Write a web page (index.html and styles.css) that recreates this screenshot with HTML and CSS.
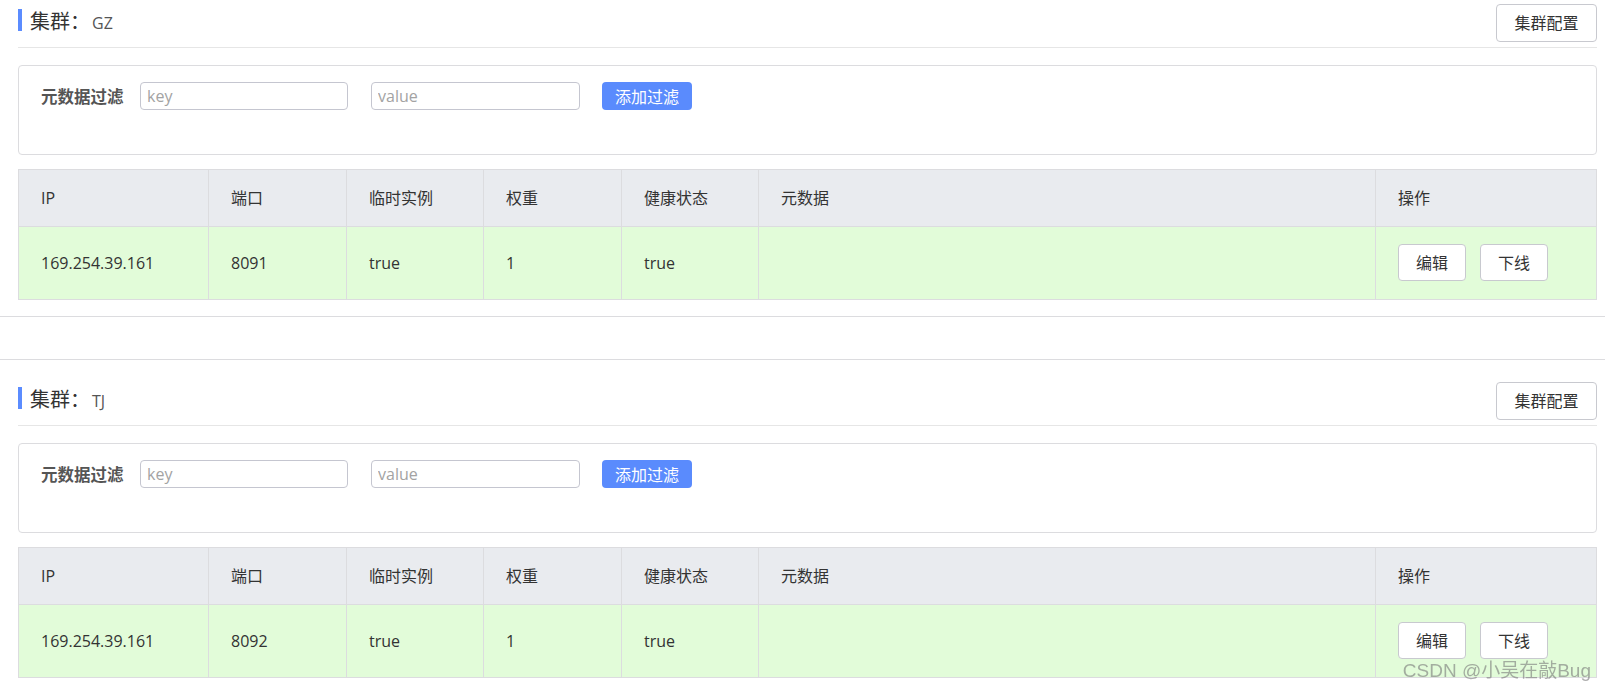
FILE: index.html
```html
<!DOCTYPE html>
<html lang="zh-CN">
<head>
<meta charset="utf-8">
<title>集群</title>
<link rel="stylesheet" href="styles.css">
</head>
<body>
<div class="page">
  <section class="cluster">
    <div class="cluster-head">
      <h2 class="cluster-title"><span class="title-main">集群：</span><span class="title-name">GZ</span></h2>
      <button class="btn btn-config" type="button">集群配置</button>
    </div>
    <div class="filter-card">
      <form class="filter-form">
        <label class="filter-label">元数据过滤</label>
        <input class="filter-input" type="text" placeholder="key">
        <input class="filter-input filter-input-value" type="text" placeholder="value">
        <button class="btn-primary" type="button">添加过滤</button>
      </form>
    </div>
    <table class="instances">
      <colgroup>
        <col class="c-ip"><col class="c-port"><col class="c-eph"><col class="c-weight"><col class="c-health"><col class="c-meta"><col>
      </colgroup>
      <thead>
        <tr><th>IP</th><th>端口</th><th>临时实例</th><th>权重</th><th>健康状态</th><th>元数据</th><th>操作</th></tr>
      </thead>
      <tbody>
        <tr>
          <td>169.254.39.161</td><td>8091</td><td>true</td><td>1</td><td>true</td><td></td>
          <td><div class="ops"><button class="btn btn-op" type="button">编辑</button><button class="btn btn-op" type="button">下线</button></div></td>
        </tr>
      </tbody>
    </table>
  </section>

  <section class="cluster">
    <div class="cluster-head">
      <h2 class="cluster-title"><span class="title-main">集群：</span><span class="title-name">TJ</span></h2>
      <button class="btn btn-config" type="button">集群配置</button>
    </div>
    <div class="filter-card">
      <form class="filter-form">
        <label class="filter-label">元数据过滤</label>
        <input class="filter-input" type="text" placeholder="key">
        <input class="filter-input filter-input-value" type="text" placeholder="value">
        <button class="btn-primary" type="button">添加过滤</button>
      </form>
    </div>
    <table class="instances">
      <colgroup>
        <col class="c-ip"><col class="c-port"><col class="c-eph"><col class="c-weight"><col class="c-health"><col class="c-meta"><col>
      </colgroup>
      <thead>
        <tr><th>IP</th><th>端口</th><th>临时实例</th><th>权重</th><th>健康状态</th><th>元数据</th><th>操作</th></tr>
      </thead>
      <tbody>
        <tr>
          <td>169.254.39.161</td><td>8092</td><td>true</td><td>1</td><td>true</td><td></td>
          <td><div class="ops"><button class="btn btn-op" type="button">编辑</button><button class="btn btn-op" type="button">下线</button></div></td>
        </tr>
      </tbody>
    </table>
  </section>
</div>
<div class="watermark">CSDN @小吴在敲Bug</div>
</body>
</html>
```

FILE: styles.css
```css
* { box-sizing: border-box; }

html, body {
  margin: 0;
  padding: 0;
  background: #fff;
}

body {
  font-family: "Open Sans", "Noto Sans CJK SC", sans-serif;
  font-size: 16px;
  color: #333;
  overflow: hidden;
}

.page {
  margin-top: -19px;
}

.cluster {
  border-top: 1px solid #dcdcdf;
  border-bottom: 1px solid #dcdcdf;
  padding: 22px 8px 16px 18px;
  margin-bottom: 42px;
}

.cluster-head {
  display: flex;
  justify-content: space-between;
  align-items: flex-start;
  padding-bottom: 5px;
  border-bottom: 1px solid #e6e6e6;
}

.cluster-title {
  margin: 5px 0 0 0;
  display: flex;
  align-items: baseline;
  height: 22px;
  border-left: 4px solid #5b8cff;
  padding-left: 8px;
  font-weight: normal;
  line-height: 22px;
}

.title-main {
  font-size: 20px;
  color: #333;
  position: relative;
  top: 2px;
}

.title-name {
  font-size: 16px;
  color: #555;
  margin-left: 2px;
  position: relative;
  top: 2px;
}

.btn {
  font-family: "Open Sans", "Noto Sans CJK SC", sans-serif;
  font-size: 16px;
  color: #333;
  background: #fff;
  border: 1px solid #c8c9cf;
  border-radius: 4px;
  cursor: pointer;
  line-height: 1;
}

.btn-config {
  height: 38px;
  width: 101px;
  padding: 0;
}

.filter-card {
  margin-top: 17px;
  border: 1px solid #dcdcdf;
  border-radius: 4px;
  padding: 16px 22px 44px 22px;
}

.filter-form {
  display: flex;
  align-items: center;
  height: 28px;
}

.filter-label {
  width: 99px;
  flex: none;
  font-weight: bold;
  color: #555;
  font-size: 16.5px;
}

.filter-input {
  width: 208px;
  height: 28px;
  border: 1px solid #c5c6d0;
  border-radius: 4px;
  padding: 0 6px;
  font-family: "Open Sans", "Noto Sans CJK SC", sans-serif;
  font-size: 16px;
  color: #333;
  margin-right: 23px;
  outline: none;
}

.filter-input-value {
  width: 209px;
  margin-right: 22px;
}

.filter-input::placeholder {
  color: #a3a3a3;
}

.btn-primary {
  width: 90px;
  height: 28px;
  border: none;
  border-radius: 4px;
  background: #5a8bfd;
  color: #fff;
  font-family: "Open Sans", "Noto Sans CJK SC", sans-serif;
  font-size: 16px;
  padding: 0;
  cursor: pointer;
}

.instances {
  margin-top: 14px;
  width: 100%;
  table-layout: fixed;
  border-collapse: separate;
  border-spacing: 0;
  border-top: 1px solid #dcdcdf;
  border-left: 1px solid #dcdcdf;
}

.c-ip { width: 190px; }
.c-port { width: 138px; }
.c-eph { width: 137px; }
.c-weight { width: 138px; }
.c-health { width: 137px; }
.c-meta { width: 617px; }

.instances th,
.instances td {
  border-right: 1px solid #dcdcdf;
  border-bottom: 1px solid #dcdcdf;
  text-align: left;
  font-weight: normal;
  padding: 0 22px;
  line-height: 24px;
  vertical-align: middle;
  color: #333;
}

.instances th {
  background: #e9ebef;
  padding-top: 16px;
  padding-bottom: 16px;
}

.instances td {
  background: #e2fcd9;
  padding-top: 17px;
  padding-bottom: 18px;
}

.ops {
  display: flex;
  gap: 14px;
}

.btn-op {
  width: 68px;
  height: 37px;
  padding: 0;
}

.watermark {
  position: fixed;
  right: 14px;
  bottom: 8px;
  font-family: "Liberation Sans", "Noto Sans CJK SC", sans-serif;
  font-size: 19px;
  color: rgba(120, 120, 120, 0.6);
  pointer-events: none;
}
```
